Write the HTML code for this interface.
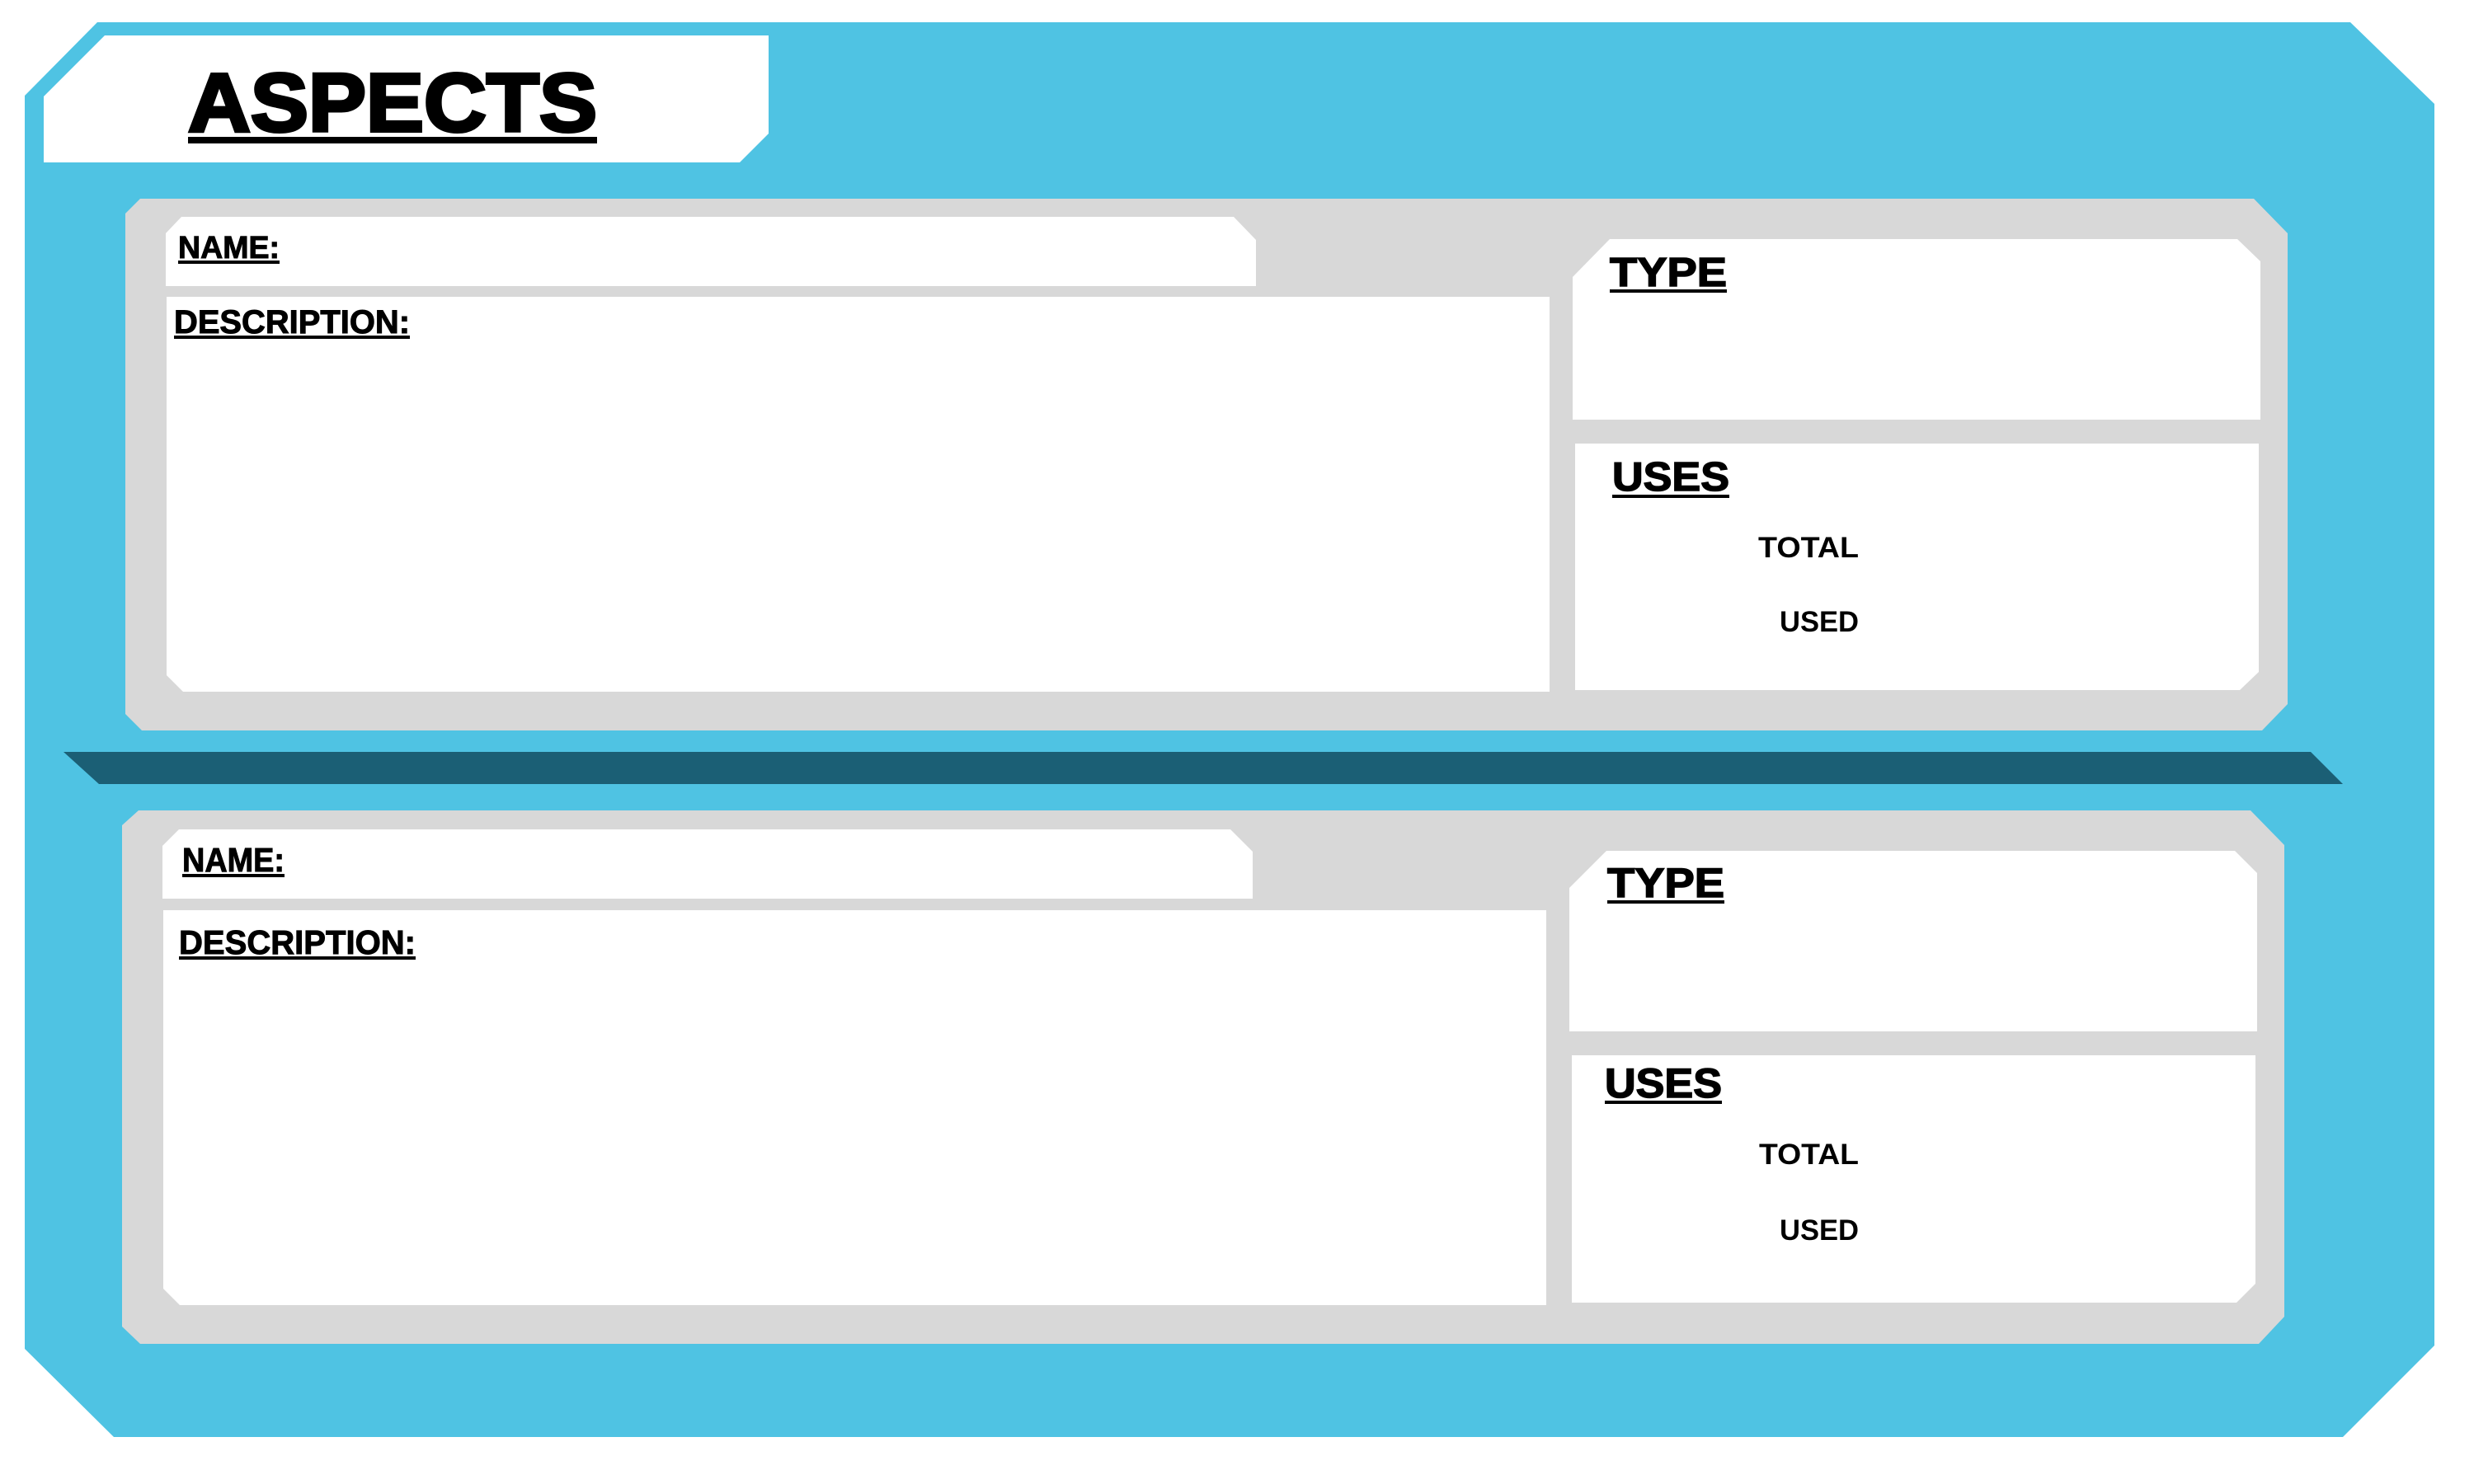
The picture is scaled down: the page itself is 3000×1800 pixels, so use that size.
<!DOCTYPE html>
<html><head><meta charset="utf-8"><style>
html,body{margin:0;padding:0;background:#fff;}
svg{display:block;}
text{font-family:"Liberation Sans",sans-serif;font-weight:bold;fill:#000;}
</style></head><body>
<svg width="3000" height="1800" viewBox="0 0 3000 1800" xmlns="http://www.w3.org/2000/svg">
<rect width="3000" height="1800" fill="#fff"/>
<!-- outer blue -->
<polygon fill="#4FC3E3" points="118,27 2850,27 2952,126 2952,1632 2841,1743 138,1743 30,1636 30,116"/>
<!-- title box -->
<polygon fill="#fff" points="127,43 932,43 932,162 897,197 53,197 53,117"/>
<text x="228" y="159" font-size="100" textLength="496" lengthAdjust="spacingAndGlyphs" stroke="#000" stroke-width="4">ASPECTS</text>
<rect x="228" y="166" width="496" height="8" fill="#000"/>

<!-- dark bar -->
<polygon fill="#1B5F75" points="77,912 2802,912 2841,951 120,951"/>

<!-- panel 1 -->
<polygon fill="#D8D8D8" points="170,241 2733,241 2774,283 2774,854 2743,886 172,886 152,866 152,259"/>
<polygon fill="#fff" points="220,263 1496,263 1523,291 1523,347 201,347 201,283"/>
<text x="216" y="313" font-size="38" textLength="123" lengthAdjust="spacingAndGlyphs" stroke="#000" stroke-width="1">NAME:</text>
<rect x="216" y="316" width="123" height="4" fill="#000"/>
<polygon fill="#fff" points="202,360 1879,360 1879,839 222,839 202,819"/>
<text x="211" y="404" font-size="40" textLength="286" lengthAdjust="spacingAndGlyphs" stroke="#000" stroke-width="1">DESCRIPTION:</text>
<rect x="211" y="407" width="286" height="4" fill="#000"/>
<polygon fill="#fff" points="1952,290 2713,290 2741,317 2741,509 1907,509 1907,336"/>
<text x="1952" y="347" font-size="49" textLength="142" lengthAdjust="spacingAndGlyphs" stroke="#000" stroke-width="1.5">TYPE</text>
<rect x="1952" y="351" width="142" height="4" fill="#000"/>
<polygon fill="#fff" points="1910,538 2739,538 2739,815 2716,837 1910,837"/>
<text x="1955" y="595" font-size="49" textLength="142" lengthAdjust="spacingAndGlyphs" stroke="#000" stroke-width="1.5">USES</text>
<rect x="1955" y="600" width="142" height="4" fill="#000"/>
<text x="2132" y="676" font-size="35" textLength="122" lengthAdjust="spacingAndGlyphs">TOTAL</text>
<text x="2158" y="766" font-size="35" textLength="96" lengthAdjust="spacingAndGlyphs">USED</text>

<!-- panel 2 -->
<polygon fill="#D8D8D8" points="168,983 2729,983 2770,1025 2770,1597 2739,1630 170,1630 148,1609 148,1001"/>
<polygon fill="#fff" points="217,1006 1492,1006 1519,1033 1519,1090 197,1090 197,1026"/>
<text x="221" y="1057" font-size="41" textLength="124" lengthAdjust="spacingAndGlyphs" stroke="#000" stroke-width="1">NAME:</text>
<rect x="221" y="1060" width="124" height="4" fill="#000"/>
<polygon fill="#fff" points="198,1104 1875,1104 1875,1583 218,1583 198,1563"/>
<text x="217" y="1157" font-size="41" textLength="287" lengthAdjust="spacingAndGlyphs" stroke="#000" stroke-width="1">DESCRIPTION:</text>
<rect x="217" y="1160" width="287" height="4" fill="#000"/>
<polygon fill="#fff" points="1948,1032 2710,1032 2737,1059 2737,1251 1903,1251 1903,1077"/>
<text x="1949" y="1088" font-size="50" textLength="142" lengthAdjust="spacingAndGlyphs" stroke="#000" stroke-width="1.5">TYPE</text>
<rect x="1949" y="1092" width="142" height="4" fill="#000"/>
<polygon fill="#fff" points="1906,1280 2735,1280 2735,1557 2712,1580 1906,1580"/>
<text x="1946" y="1331" font-size="50" textLength="142" lengthAdjust="spacingAndGlyphs" stroke="#000" stroke-width="1.5">USES</text>
<rect x="1946" y="1335" width="142" height="4" fill="#000"/>
<text x="2133" y="1412" font-size="35" textLength="121" lengthAdjust="spacingAndGlyphs">TOTAL</text>
<text x="2158" y="1504" font-size="35" textLength="96" lengthAdjust="spacingAndGlyphs">USED</text>
</svg>
</body></html>
